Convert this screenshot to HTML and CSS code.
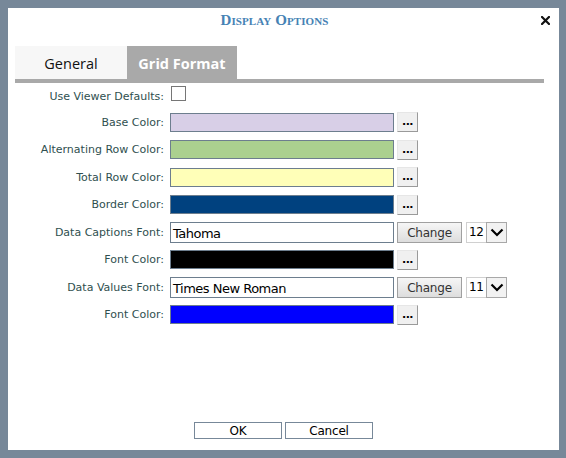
FILE: index.html
```html
<!DOCTYPE html>
<html>
<head>
<meta charset="utf-8">
<link rel="stylesheet" href="styles.css">
</head>
<body>
<div class="dialog">
  <div class="titlebar">
    <div class="title">Display Options</div>
    <div class="close"><svg width="9" height="9" viewBox="0 0 9 9"><path d="M1 1L8 8M8 1L1 8" stroke="#111" stroke-width="2.2" stroke-linecap="square"/></svg></div>
  </div>
  <div class="tabs">
    <div class="tab">General</div>
    <div class="tab active">Grid Format</div>
  </div>
  <div class="tabbar"></div>
  <div class="form">
    <div class="row first">
      <div class="label">Use Viewer Defaults:</div>
      <div class="field"><span class="check"></span></div>
    </div>
    <div class="row">
      <div class="label">Base Color:</div>
      <div class="field"><span class="swatch" style="background:#d8cfe7"></span><span class="dots">...</span></div>
    </div>
    <div class="row">
      <div class="label">Alternating Row Color:</div>
      <div class="field"><span class="swatch" style="background:#abd08f"></span><span class="dots">...</span></div>
    </div>
    <div class="row">
      <div class="label">Total Row Color:</div>
      <div class="field"><span class="swatch" style="background:#ffffb8"></span><span class="dots">...</span></div>
    </div>
    <div class="row">
      <div class="label">Border Color:</div>
      <div class="field"><span class="swatch" style="background:#00417f"></span><span class="dots">...</span></div>
    </div>
    <div class="row">
      <div class="label">Data Captions Font:</div>
      <div class="field"><span class="text">Tahoma</span><span class="change">Change</span><span class="select"><span class="num">12</span><span class="arrow"><svg width="14" height="9" viewBox="0 0 14 9"><path d="M1.5 1.5L7 7L12.5 1.5" fill="none" stroke="#000" stroke-width="2.2"/></svg></span></span></div>
    </div>
    <div class="row">
      <div class="label">Font Color:</div>
      <div class="field"><span class="swatch" style="background:#000000"></span><span class="dots">...</span></div>
    </div>
    <div class="row">
      <div class="label">Data Values Font:</div>
      <div class="field"><span class="text">Times New Roman</span><span class="change">Change</span><span class="select"><span class="num">11</span><span class="arrow"><svg width="14" height="9" viewBox="0 0 14 9"><path d="M1.5 1.5L7 7L12.5 1.5" fill="none" stroke="#000" stroke-width="2.2"/></svg></span></span></div>
    </div>
    <div class="row">
      <div class="label">Font Color:</div>
      <div class="field"><span class="swatch" style="background:#0000ff"></span><span class="dots">...</span></div>
    </div>
  </div>
  <div class="footer">
    <span class="btn">OK</span>
    <span class="btn">Cancel</span>
  </div>
</div>
</body>
</html>
```
FILE: styles.css
```css
html, body {
  margin: 0;
  padding: 0;
}
body {
  background: #778899;
  padding: 8px;
  width: 566px;
  height: 458px;
  box-sizing: border-box;
  font-family: "DejaVu Sans", Verdana, sans-serif;
}
.dialog {
  background: #fff;
  width: 551px;
  height: 442px;
  display: flex;
  flex-direction: column;
}
.titlebar {
  height: 38px;
  display: flex;
  align-items: flex-start;
  box-sizing: border-box;
  padding-top: 4px;
}
.title {
  flex: 1;
  text-align: center;
  font-family: "Liberation Serif", "Times New Roman", serif;
  font-weight: bold;
  font-variant: small-caps;
  font-size: 15px;
  line-height: 16px;
  color: #4682b4;
  letter-spacing: 0.1px;
}
.close {
  width: 9px;
  height: 9px;
  margin-right: 9px;
  margin-top: 4px;
  line-height: 0;
}
.tabs {
  display: flex;
  margin-left: 7px;
  height: 33px;
}
.tab {
  width: 112px;
  background: #f7f7f7;
  font-family: "Open Sans", "Noto Sans", sans-serif;
  font-size: 14.5px;
  color: #111;
  display: flex;
  align-items: center;
  justify-content: center;
  padding-top: 2px;
  box-sizing: border-box;
}
.tab.active {
  width: 110px;
  background: #a9a9a9;
  color: #fff;
  font-weight: bold;
}
.tabbar {
  height: 4px;
  background: #a9a9a9;
  margin-left: 7px;
  margin-right: 15px;
}
.form {
  flex: 1;
  display: flex;
  flex-direction: column;
  gap: 7.5px;
  padding-top: 2px;
}
.row {
  display: grid;
  grid-template-columns: 156px auto;
  column-gap: 6px;
  height: 20px;
  align-items: center;
}
.row.first {
  height: 19.5px;
  align-items: start;
}
.label {
  text-align: right;
  font-size: 11px;
  color: #2f4f4f;
  letter-spacing: 0;
  white-space: nowrap;
}
.row.first .label {
  padding-top: 5px;
}
.field {
  display: flex;
  align-items: center;
  gap: 2px;
}
.row.first .field {
  padding-top: 1px;
}
.check {
  width: 13px;
  height: 13px;
  border: 1px solid #767676;
  margin-left: 1px;
  background: #fff;
}
.swatch {
  width: 224px;
  height: 19px;
  border: 1px solid #6d7e8e;
  box-sizing: border-box;
}
.dots {
  width: 21px;
  height: 20px;
  margin-left: 1px;
  box-sizing: border-box;
  background: #f0f0f0;
  border: 1px solid;
  border-color: #e6e6e6 #9a9a9a #9a9a9a #e6e6e6;
  font-size: 11px;
  font-weight: bold;
  color: #000;
  display: flex;
  justify-content: center;
  line-height: 18px;
  letter-spacing: -0.5px;
}
.text {
  width: 224px;
  height: 21px;
  border: 1px solid #6d7e8e;
  box-sizing: border-box;
  font-size: 13px;
  color: #000;
  padding-left: 2px;
  letter-spacing: -0.5px;
  line-height: 19px;
  padding-top: 1px;
  white-space: nowrap;
}
.change {
  width: 65px;
  height: 21px;
  margin-left: 1px;
  box-sizing: border-box;
  border: 1px solid #a0a0a0;
  background: linear-gradient(#f6f6f6, #dddddd);
  font-size: 12px;
  color: #333;
  display: flex;
  justify-content: center;
  align-items: center;
  letter-spacing: -0.2px;
}
.select {
  display: flex;
  height: 21px;
  margin-left: 2px;
}
.num {
  width: 20px;
  box-sizing: border-box;
  border: 1px solid #d0d0d0;
  border-right: none;
  font-size: 12px;
  color: #000;
  line-height: 19px;
  padding-left: 2px;
  letter-spacing: -0.3px;
}
.arrow {
  width: 21px;
  box-sizing: border-box;
  border: 1px solid #a8a8a8;
  background: #f2f2f2;
  display: flex;
  align-items: center;
  justify-content: center;
}
.footer {
  display: flex;
  justify-content: center;
  gap: 3px;
  padding-bottom: 11px;
  padding-left: 0;
}
.btn {
  width: 88px;
  height: 17px;
  box-sizing: border-box;
  border: 1px solid #778899;
  background: #fff;
  font-size: 12px;
  color: #000;
  display: flex;
  justify-content: center;
  align-items: center;
  letter-spacing: -0.2px;
}
```
